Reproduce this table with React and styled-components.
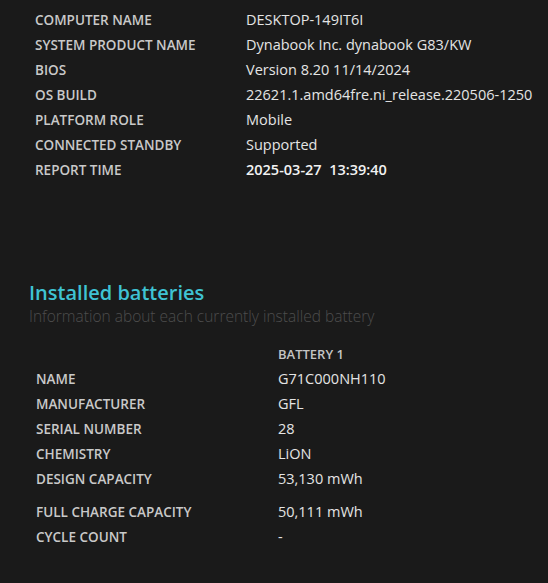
import React from "react";
import styled, { createGlobalStyle } from "styled-components";

const Global = createGlobalStyle`
  html, body { margin: 0; padding: 0; background: #1a1a1a; }
  body { font-family: "Open Sans", "Noto Sans", sans-serif; }
`;

const Page = styled.div`
  width: 548px;
  height: 583px;
  background: #1a1a1a;
  padding: 7px 0 0 35px;
  box-sizing: border-box;
  overflow: hidden;
`;

const Table = styled.div`
  display: flex;
  flex-direction: column;
  margin-left: ${(p) => p.$indent || 0}px;
  margin-top: ${(p) => p.$top || 0}px;
`;

const Row = styled.div`
  display: grid;
  grid-template-columns: ${(p) => p.$labelWidth}px auto;
  align-items: center;
  box-sizing: border-box;
  height: ${(p) => 25 + (p.$gap || 0)}px;
  padding-top: ${(p) => p.$gap || 0}px;
`;

const Label = styled.div`
  font-size: 13.5px;
  font-weight: 600;
  color: #c9c9c9;
  white-space: nowrap;
`;

const Value = styled.div`
  font-size: 14.5px;
  font-weight: ${(p) => (p.$strong ? 600 : 400)};
  color: ${(p) => (p.$strong ? "#f2f2f2" : "#e4e4e4")};
  white-space: nowrap;
`;

const Section = styled.section`
  margin-top: 98px;
  margin-left: -6px;
`;

const Heading = styled.h2`
  margin: 0;
  font-size: 20px;
  font-weight: 600;
  color: #3fc3d3;
  line-height: 26px;
`;

const Subtitle = styled.div`
  font-size: 15.5px;
  font-weight: 300;
  color: #4d4d4d;
  line-height: 20px;
`;

const ColumnHead = styled.div`
  font-size: 13px;
  font-weight: 600;
  color: #c4c4c4;
  white-space: nowrap;
`;

const system = [
  ["COMPUTER NAME", "DESKTOP-149IT6I"],
  ["SYSTEM PRODUCT NAME", "Dynabook Inc. dynabook G83/KW"],
  ["BIOS", "Version 8.20 11/14/2024"],
  ["OS BUILD", "22621.1.amd64fre.ni_release.220506-1250"],
  ["PLATFORM ROLE", "Mobile"],
  ["CONNECTED STANDBY", "Supported"],
  ["REPORT TIME", "2025-03-27\u00a0\u00a013:39:40", true],
];

const battery = [
  ["NAME", "G71C000NH110"],
  ["MANUFACTURER", "GFL"],
  ["SERIAL NUMBER", "28"],
  ["CHEMISTRY", "LiON"],
  ["DESIGN CAPACITY", "53,130 mWh"],
  ["FULL CHARGE CAPACITY", "50,111 mWh", 8],
  ["CYCLE COUNT", "-"],
];

export default function App() {
  return (
    <Page>
      <Global />
      <Table>
        {system.map(([l, v, strong]) => (
          <Row key={l} $labelWidth={211}>
            <Label>{l}</Label>
            <Value $strong={strong}>{v}</Value>
          </Row>
        ))}
      </Table>
      <Section>
        <Heading>Installed batteries</Heading>
        <Subtitle>Information about each currently installed battery</Subtitle>
        <Table $indent={7} $top={15}>
          <Row $labelWidth={242}>
            <div />
            <ColumnHead>BATTERY 1</ColumnHead>
          </Row>
          {battery.map(([l, v, gap]) => (
            <Row key={l} $labelWidth={242} $gap={gap}>
              <Label>{l}</Label>
              <Value>{v}</Value>
            </Row>
          ))}
        </Table>
      </Section>
    </Page>
  );
}
